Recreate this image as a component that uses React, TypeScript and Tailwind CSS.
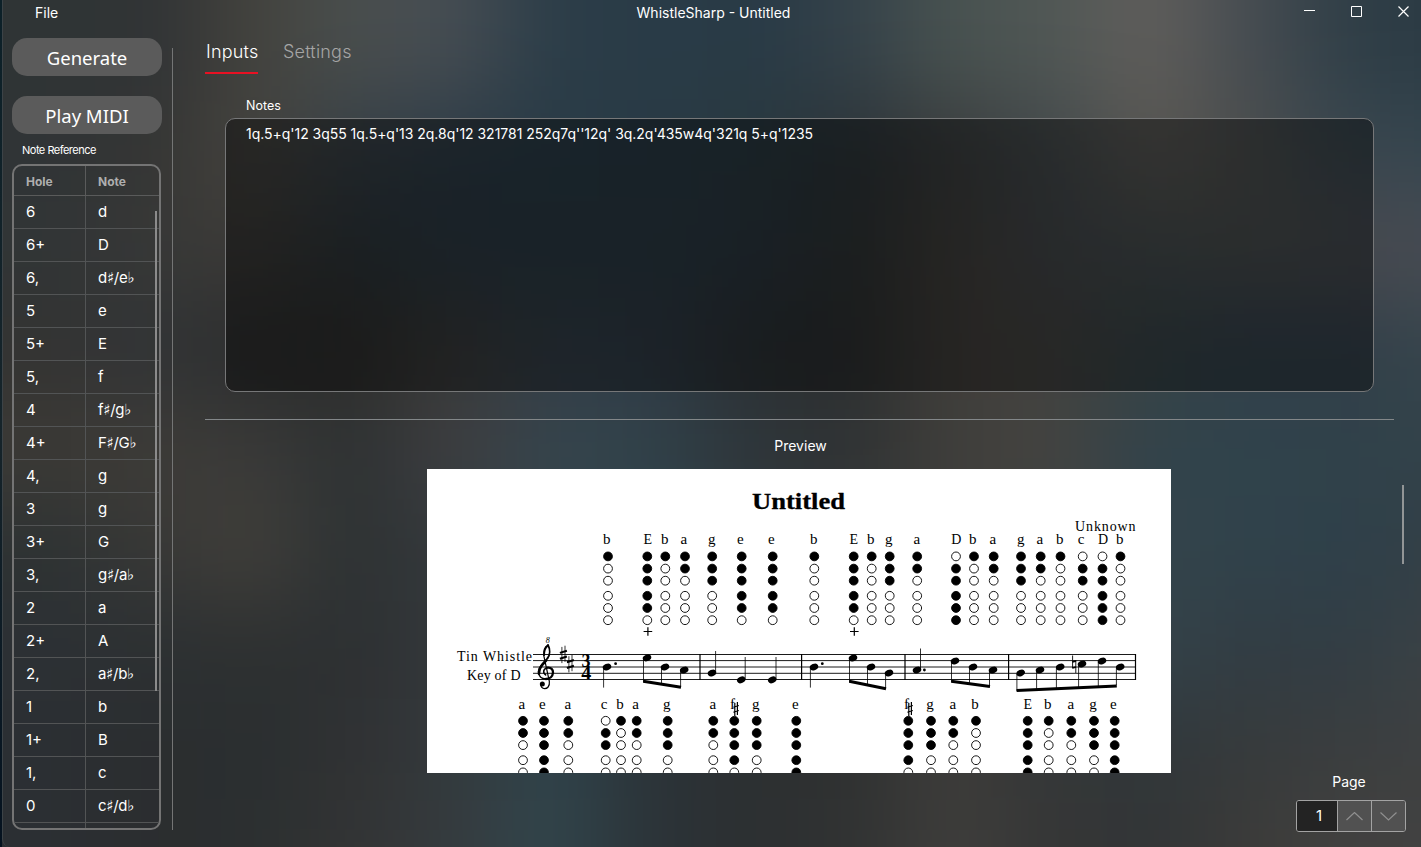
import React from "react";

const BACKDROP: string[][] = [
  ["#2f3435", "#303335", "#43423d", "#494e4d", "#464d53", "#2c3d48", "#293b47", "#283a46", "#344149", "#485250", "#505755", "#605e5b", "#464c51", "#2f3e47", "#2b3a43"],
  ["#303436", "#353534", "#45433e", "#363f46", "#2d3b46", "#293b46", "#293a45", "#29393f", "#2b3338", "#3a3c3d", "#41484b", "#595752", "#4b4d4d", "#394750", "#35454e"],
  ["#313536", "#373837", "#3c3a37", "#2c3438", "#2b3943", "#2a3a43", "#2a3a42", "#2b3641", "#2d3233", "#413e3a", "#42464a", "#444b4d", "#484d4c", "#484a4f", "#484b53"],
  ["#333332", "#313436", "#2b2c2d", "#2e2d2b", "#3a3a38", "#333d47", "#303a46", "#2b3033", "#2a2d2e", "#413e3a", "#43423f", "#364346", "#323f4b", "#323e49", "#36464c"],
  ["#3c3a36", "#3e3c38", "#3a3a39", "#2e3233", "#3e3e41", "#36454d", "#30424a", "#2e363b", "#303334", "#3f3e3b", "#444340", "#32434b", "#30434b", "#30414a", "#33434a"],
  ["#2d3233", "#383836", "#413f3b", "#2d3233", "#34383b", "#34434b", "#30424a", "#2e363b", "#303334", "#3f3e3b", "#404142", "#34444c", "#30424b", "#2f404a", "#333f46"],
  ["#2c3034", "#2c3032", "#2d3031", "#2d3032", "#34383b", "#34434b", "#2f3b42", "#2c3135", "#303334", "#3a3a38", "#394044", "#34434a", "#323c43", "#323d44", "#3c4346"],
  ["#2b2f33", "#2b2d2f", "#2a2f30", "#303133", "#34393c", "#30444c", "#2b3338", "#2c2f31", "#2f3131", "#3c3b39", "#353737", "#30363a", "#373b3c", "#3b3e3f", "#3e4041"],
  ["#2b2f33", "#2b2d2f", "#2b2f30", "#333434", "#353b3e", "#31454c", "#2b3338", "#2c2f31", "#303232", "#3f3e3c", "#353636", "#323536", "#3c3b39", "#424140", "#424241"],
];

const Backdrop = () => (
  <svg className="absolute inset-0 h-full w-full" viewBox="0 0 1421 847" preserveAspectRatio="none" aria-hidden="true">
    <defs>
      <filter id="soft" filterUnits="userSpaceOnUse" x="-200" y="-200" width="1900" height="1300" colorInterpolationFilters="sRGB">
        <feGaussianBlur stdDeviation="44" />
      </filter>
    </defs>
    <rect width="1421" height="847" fill="#303538" />
    <g filter="url(#soft)">
      {BACKDROP.map((row, r) =>
        row.map((c, i) => {
          const x = i === 0 ? -150 : i * 100;
          const y = r === 0 ? -150 : r * 100;
          return (
            <rect
              key={`${r}-${i}`}
              x={x}
              y={y}
              width={(i === 14 ? 1700 : (i + 1) * 100) - x + 1}
              height={(r === 8 ? 1050 : (r + 1) * 100) - y + 1}
              fill={c}
            />
          );
        })
      )}
    </g>
  </svg>
);

const ROWS: [string, string][] = [
  ["6", "d"], ["6+", "D"], ["6,", "d♯/e♭"], ["5", "e"], ["5+", "E"], ["5,", "f"], ["4", "f♯/g♭"], ["4+", "F♯/G♭"],
  ["4,", "g"], ["3", "g"], ["3+", "G"], ["3,", "g♯/a♭"], ["2", "a"], ["2+", "A"], ["2,", "a♯/b♭"], ["1", "b"],
  ["1+", "B"], ["1,", "c"], ["0", "c♯/d♭"], ["", ""],
];

const HOLES: Record<string, string> = {
  b: "100000", a: "110000", g: "111000", e: "111110", E: "111110", D: "011111", c: "011000", f: "111100",
};

type Column = [note: string, holeX: number, textX: number];

const LINE_ONE: Column[] = [
  ["b", 608, 606.7], ["E", 647.3, 647.7], ["b", 665.3, 664.7], ["a", 685, 683.9], ["g", 712.2, 711.7], ["e", 741.7, 740.4],
  ["e", 772.7, 771.4], ["b", 814.3, 813.7], ["E", 853.7, 853.8], ["b", 871.7, 870.8], ["g", 889.7, 888.8], ["a", 917.2, 916.8],
  ["D", 956, 956.3], ["b", 974, 972.8], ["a", 993.7, 992.8], ["g", 1021, 1020.7], ["a", 1040.7, 1039.9], ["b", 1060.5, 1059.8],
  ["c", 1082.7, 1081.2], ["D", 1102.5, 1103], ["b", 1120.5, 1119.8],
];

const LINE_TWO: Column[] = [
  ["a", 523, 521.9], ["e", 544, 542.4], ["a", 568.3, 567.9], ["c", 605.7, 604.2], ["b", 621, 620], ["a", 636.7, 635.5],
  ["g", 667.7, 666.7], ["a", 713.3, 712.9], ["f", 734.3, 732.6], ["g", 756.7, 755.7], ["e", 796.3, 795.4], ["f", 908.3, 906.6],
  ["g", 931, 930], ["a", 953.3, 952.9], ["b", 976, 974.9], ["E", 1027.7, 1027.8], ["b", 1048.7, 1047.8], ["a", 1071.3, 1070.9],
  ["g", 1094, 1093], ["e", 1114.7, 1113.4],
];

const OFFSETS = [0, 12.2, 24.3, 39.4, 51.6, 63.8];

const SmallSharp = ({ x, y }: { x: number; y: number }) => (
  <path
    d={`M${x - 1.2} ${y - 5.6}v13M${x + 1.4} ${y - 6.6}v13M${x - 2.6} ${y - 1.2}l5.4 -1.8M${x - 2.6} ${y + 3.8}l5.4 -1.8`}
    stroke="#000"
    strokeWidth="1.2"
  />
);

const Fingering = ({ columns, textY, top, marks }: { columns: Column[]; textY: number; top: number; marks?: boolean }) => (
  <g>
    {columns.map(([n, hx, tx]) => (
      <g key={hx}>
        <text x={tx} y={textY} textAnchor="middle" fontSize={n === "E" || n === "D" ? 14 : 15}>{n}</text>
        {n === "f" && <SmallSharp x={tx + 3.4} y={708.5} />}
        {OFFSETS.map((o, i) => (
          <circle key={o} cx={hx} cy={top + o} r="4.4" fill={HOLES[n][i] === "1" ? "#000" : "#fff"} stroke="#000" strokeWidth="0.9" />
        ))}
        {marks && n === "E" && <path d={`M${hx - 3.7} 631.5h8.6M${hx + 0.6} 627.2v8.6`} stroke="#000" strokeWidth="1.2" />}
      </g>
    ))}
  </g>
);

const KeySharp = ({ x, y }: { x: number; y: number }) => (
  <g stroke="#000">
    <path d={`M${x - 1.4} ${y - 7.4}v16.2M${x + 1.7} ${y - 8.6}v16.2`} strokeWidth="0.8" />
    <path d={`M${x - 3.4} ${y - 1.4}l7 -2.2M${x - 3.4} ${y + 4.4}l7 -2.2`} strokeWidth="2" />
  </g>
);

const NOTE_HEADS: [number, number][] = [
  [607, 667], [647, 657.8], [665, 667], [684.2, 670], [712, 673], [741.2, 679.8], [772.2, 679.8],
  [814, 667], [853, 658], [871, 667], [889, 673], [917, 670], [955, 661], [973, 667], [993, 670],
  [1020.7, 673], [1040, 670], [1060.2, 667], [1082, 664], [1102, 661], [1120.2, 667],
];

const STEMS: [number, number, number][] = [
  [603.6, 668, 687.6], [643.5, 659, 682], [661.5, 668, 684], [680.6, 671, 687],
  [715.6, 651, 672], [745.2, 657, 679], [776, 657, 679],
  [810.4, 668, 687.6], [849.5, 659, 682], [867.5, 668, 685], [885.6, 674, 689],
  [920.5, 648.5, 669], [951.5, 662, 682], [969.5, 668, 684], [989.5, 671, 686],
  [1016.9, 674, 691], [1036.6, 671, 689], [1056.4, 668, 688], [1078.6, 665, 687], [1098.3, 662, 686], [1116.4, 668, 685],
];

const Clef = () => (
  <g transform="translate(527 630) scale(0.3333)" fill="none" stroke="#000" strokeLinecap="round" strokeLinejoin="round">
    <path d="M56 135C47 129 48 116 61 113" strokeWidth="4.5" />
    <path d="M61 113C72 111 79 119 78 128C77 139 69 147 57 147" strokeWidth="7" />
    <path d="M57 147C43 147 35 137 35 125C36 107 53 99 62 84" strokeWidth="5" />
    <path d="M36 131C35 110 48 102 57 92" strokeWidth="8" />
    <path d="M62 84C69 74 70 58 63 45" strokeWidth="5.5" />
    <path d="M63 45C52 50 49 64 51 80L67 154C69 170 60 176 53 176C45 176 40 168 42 163" strokeWidth="3.6" />
    <path d="M62 47C53 54 51 62 51 76" strokeWidth="5.5" />
    <circle cx="46" cy="162" r="7.5" fill="#000" stroke="none" />
  </g>
);

const Sheet = () => (
  <svg
    className="block h-[304px] w-[744px] shrink-0 bg-white font-['Liberation_Serif',serif]"
    viewBox="427 469 744 304"
    fill="#000"
  >
    <text x="752" y="509" fontSize="24" fontWeight="700" textLength="93" lengthAdjust="spacingAndGlyphs" stroke="#000" strokeWidth="0.3">Untitled</text>
    <text x="1075" y="531" fontSize="14" textLength="60.5">Unknown</text>
    <text x="457" y="661" fontSize="14" textLength="75">Tin Whistle</text>
    <text x="467" y="680" fontSize="14" textLength="53.5">Key of D</text>

    <Fingering columns={LINE_ONE} textY={544.3} top={556.4} marks />

    <g stroke="#000">
      <path d="M533 654.5H1136M533 660.6H1136M533 667H1136M533 673.3H1136M533 679.5H1136" strokeWidth="0.9" />
      <path d="M700 654V680M801.6 654V680M905 654V680M1008.6 654V680M1135.5 654V680" strokeWidth="1.2" />
      {STEMS.map(([x, a, b]) => (
        <path key={x} d={`M${x} ${a}V${b}`} strokeWidth="0.8" />
      ))}
      <path
        d="M643.2 681.3L681 687.3M849.2 681.3L886 688.7M951.2 681.3L990 686.4M1016.6 690.6L1116.8 686"
        strokeWidth="3"
      />
      <path d="M1072.6 655.5V668.3M1075.8 660V673" strokeWidth="0.9" />
      <path d="M1072.4 661.8l3.6 -1M1072.4 668l3.6 -1" strokeWidth="1.8" />
    </g>
    {NOTE_HEADS.map(([x, y]) => (
      <ellipse key={x} cx={x} cy={y} rx="4.4" ry="3.2" transform={`rotate(-24 ${x} ${y})`} />
    ))}
    <circle cx="615.6" cy="663.7" r="1.4" />
    <circle cx="822.3" cy="663.7" r="1.4" />
    <circle cx="924.4" cy="670" r="1.4" />

    <Clef />
    <text x="547.8" y="643.4" fontSize="8" fontStyle="italic" textAnchor="middle">8</text>
    <KeySharp x={563.3} y={654.3} />
    <KeySharp x={570.3} y={663.6} />
    <text x="581.6" y="667" fontSize="18" fontWeight="700">3</text>
    <text x="581.2" y="679.4" fontSize="18" fontWeight="700" textLength="10" lengthAdjust="spacingAndGlyphs">4</text>

    <Fingering columns={LINE_TWO} textY={709.3} top={720.8} />
  </svg>
);

const TitleBar = () => (
  <header className="flex h-[26px] items-center pr-3 pl-[3px] text-[14px]">
    <div className="w-[200px] pb-[2px] pl-[29px]">File</div>
    <div className="flex-1 pb-[2px] text-center">WhistleSharp - Untitled</div>
    <div className="-mt-[3px] flex w-[188px] items-center justify-end gap-9">
      <svg width="11" height="11" stroke="#fff"><path d="M0 4.5H11" /></svg>
      <svg width="11" height="11" fill="none" stroke="#fff"><path d="M.5 .5H10.5V10.5H.5Z" /></svg>
      <svg width="11" height="11" stroke="#fff"><path d="M.5 .5L10.5 10.5M10.5 .5L.5 10.5" strokeWidth="1.2" /></svg>
    </div>
  </header>
);

const SideButton = ({ children }: { children: React.ReactNode }) => (
  <button className="h-[38px] w-[150px] rounded-[15px] bg-[#5b5b5b] pt-px font-['Noto_Sans',sans-serif] text-[18.5px] leading-[35px]">
    {children}
  </button>
);

const Sidebar = () => (
  <aside className="flex w-[170px] flex-col pt-3 pl-[9px]">
    <SideButton>Generate</SideButton>
    <div className="h-5" />
    <SideButton>Play MIDI</SideButton>
    <div className="h-[30px] pl-[10px] text-[11px] leading-[32px] tracking-[-0.5px]">Note Reference</div>
    <div className="relative h-[666px] w-[149px] overflow-hidden rounded-[10px] border-2 border-[#747474]">
      <div className="grid h-[30px] grid-cols-[72px_1fr] border-b border-[#5a5b5b] text-[12px] leading-[32px] font-bold text-[#aeaeae]">
        <div className="border-r border-[#5a5b5b] pl-3">Hole</div>
        <div className="pl-3">Note</div>
      </div>
      {ROWS.map(([hole, note], i) => (
        <div key={i} className="grid h-[33px] grid-cols-[72px_1fr] border-b border-[#525455] text-[15px] leading-[32px]">
          <div className="border-r border-[#525455] pl-3">{hole}</div>
          <div className={note.length > 1 ? "pl-3 tracking-[-0.3px]" : "pl-3"}>{note}</div>
        </div>
      ))}
      <div className="absolute top-[45px] right-[2px] h-[480px] w-[2px] bg-[#8b8b8b]" />
    </div>
  </aside>
);

const PageSpinner = () => (
  <div className="mt-auto mb-[15px] flex flex-col">
    <div className="mb-2 pr-1 text-center text-[14px] leading-[20px]">Page</div>
    <div className="flex h-8 w-[110px] overflow-hidden rounded-[3px] border border-[#a3a3a3]">
      <div className="w-10 bg-[#232323] pl-1 text-center text-[15px] leading-[30px]">1</div>
      {["M.5 8L8.5 .5L16.5 8", "M.5 .5L8.5 8L16.5 .5"].map((d) => (
        <div key={d} className="flex flex-1 items-center justify-center border-l border-[#a3a3a3] bg-[#515151]">
          <svg width="17" height="9" fill="none" stroke="#8f8f8f" strokeWidth="1.2"><path d={d} /></svg>
        </div>
      ))}
    </div>
  </div>
);

export default function App() {
  return (
    <div className="relative h-[847px] w-[1421px] overflow-hidden bg-[#0b1822] font-[Inter,'DejaVu_Sans',sans-serif] text-white">
      <Backdrop />
      <div className="absolute inset-y-0 left-0 w-[2px] bg-linear-to-b from-[#0c2028] via-[#16242a] to-[#05121f]" />
      <div className="relative ml-[2px] flex h-full flex-col rounded-bl-lg border-l border-[#3c4347]">
        <TitleBar />
        <div className="flex min-h-0 flex-1">
          <Sidebar />
          <div className="mt-[22px] -ml-px h-[782px] w-px shrink-0 bg-[#747575]" />
          <main className="flex min-w-0 flex-1 flex-col pl-8">
            <nav className="flex h-12 gap-[25px] pt-[10px] text-[18px] leading-[32px] font-light tracking-[0.2px]">
              <div className="h-[38px] w-[53px] border-b-2 border-[#e81123] pl-px">Inputs</div>
              <div className="text-[#a5a5a5]">Settings</div>
            </nav>
            <div className="mt-6 ml-[41px] h-5 text-[12.5px] leading-[16px]">Notes</div>
            <div className="ml-5 h-[274px] w-[1149px] shrink-0 rounded-[10px] border border-[#767778] bg-black/40 px-5 pt-[5px] text-[14px] leading-[20px] tracking-[-0.025px]">
              1q.5+q'12 3q55 1q.5+q'13 2q.8q'12 321781 252q7q''12q' 3q.2q'435w4q'321q 5+q'1235
            </div>
            <div className="mt-[27px] h-px w-[1189px] shrink-0 bg-[#838789]" />
            <div className="flex h-[49px] w-[1190px] shrink-0 items-center justify-center text-[14px]">
              <span className="pt-[2px] pl-px">Preview</span>
            </div>
            <div className="flex min-h-0 flex-1 items-start pl-[222px]">
              <Sheet />
              <div className="relative flex h-full flex-1 justify-end pr-[15px]">
                <div className="absolute top-4 right-[17px] h-[79px] w-[2px] bg-[#929596]" />
                <PageSpinner />
              </div>
            </div>
          </main>
        </div>
      </div>
    </div>
  );
}
